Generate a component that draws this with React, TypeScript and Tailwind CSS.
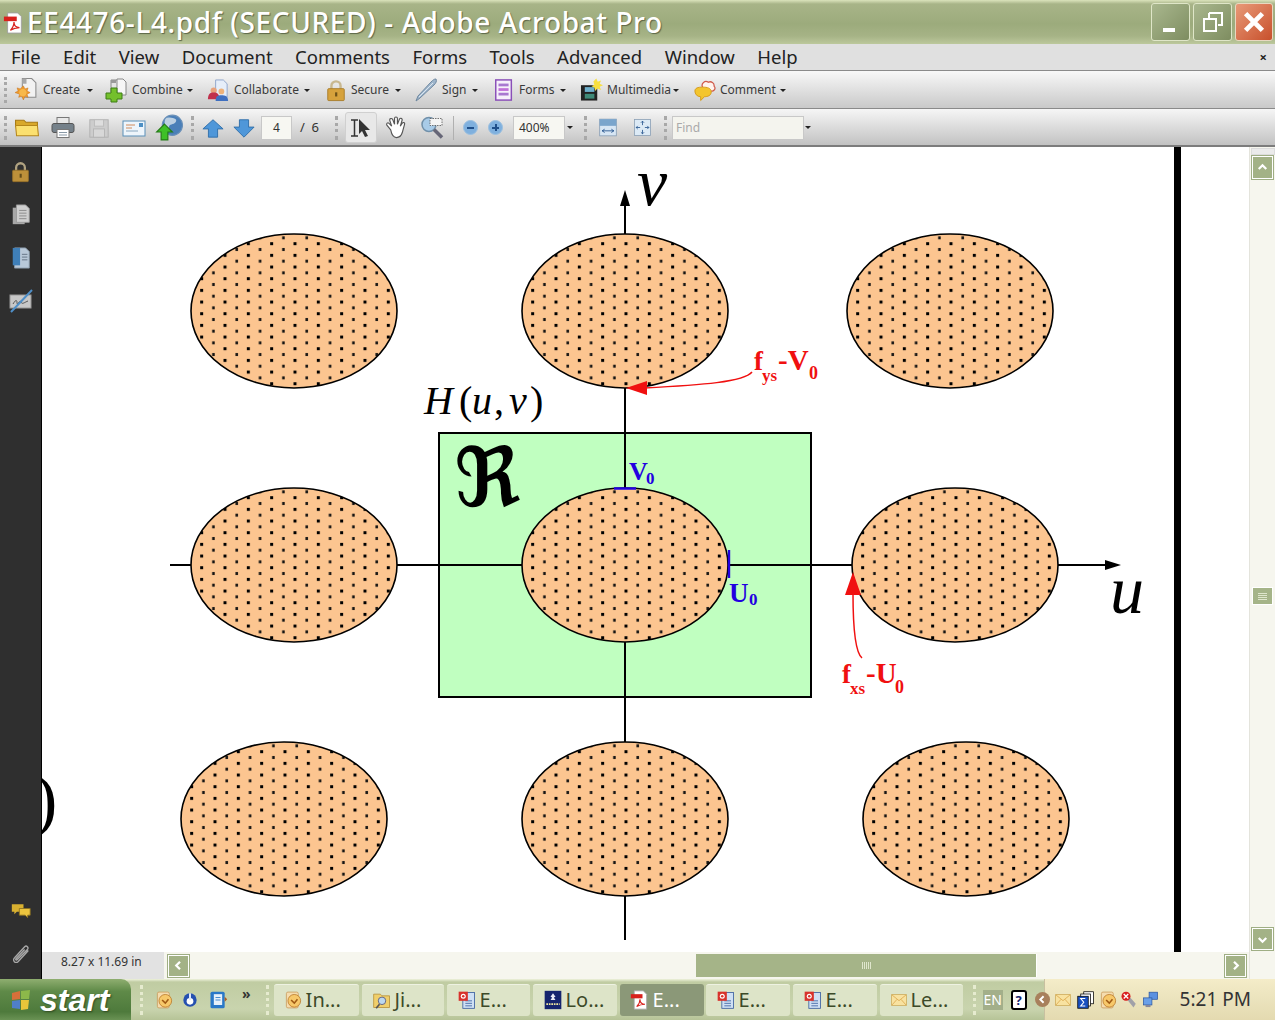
import React from "react";

type P = { className?: string };
const Grid = ({ className = "", children }: P & { children: React.ReactNode }) => (
  <svg viewBox="0 0 24 24" className={"shrink-0 " + className}>{children}</svg>
);

const Grip = ({ className = "" }: P) => <div className={"shrink-0 w-[3px] border-l-[3px] border-dotted border-[#a8a8a8] " + className} />;
const Caret = ({ className = "" }: P) => <div className={"shrink-0 w-0 h-0 border-x-[3px] border-x-transparent border-t-[3px] border-t-[#222] " + className} />;

const CreateIc = () => (<Grid className="w-[25px] h-[26px]"><path d="M8 1h9l4 4v14H8z" fill="#f2f2f2" stroke="#8a8a8a" /><path d="M8 1h4v5H8z" fill="#a8a8a8" /><path d="M9 8l1.500 3 3-1-1 3 3 1.500-3 1.500 1 3-3-1-1.500 3.500-1.500-3.500-3 1 1-3L1 14.500 4 13l-1-3 3 1z" fill="#ee9a2c" stroke="#c8741c" strokeWidth=".5" /><circle cx="8.500" cy="14.500" r="3.500" fill="#f7b84a" /></Grid>);
const CombineIc = () => (<Grid className="w-[24px] h-[26px]"><path d="M7 2h8l3 3v9H7z" fill="#e4e4e4" stroke="#888" /><path d="M7 2h5v3H7z" fill="#999" /><path d="M13 1h6l3 3v13h-9z" fill="#f6f6f6" stroke="#888" /><path d="M7 10h6v5h5v6h-5v3H7v-3H2v-6h5z" fill="#74c02c" stroke="#3d7d15" /></Grid>);
const CollabIc = () => (<Grid className="w-[23px] h-[25px]"><path d="M9 1h8l4 4v14H9z" fill="#e6eef9" stroke="#8fa5cc" /><circle cx="7" cy="12" r="3.200" fill="#e8a27c" /><path d="M1 21c0-5 2-7 6-7s6 2 6 7z" fill="#c0304c" /><circle cx="15" cy="13" r="3" fill="#eeb27a" /><path d="M9 23c0-5 2-6 6-6s7 1 7 6z" fill="#3f6fc0" /></Grid>);
const LockIc = ({ className = "w-[22px] h-[25px]" }: P) => (<Grid className={className}><path d="M7 11V7a5 5 0 0 1 10 0v4" fill="none" stroke="#c8b890" strokeWidth="2.600" /><rect x="3" y="10" width="18" height="13" rx="1" fill="#d6a23c" stroke="#a87c28" /><rect x="11" y="14" width="2.400" height="4.500" fill="#6d5218" /></Grid>);
const SignIc = () => (<Grid className="w-[24px] h-[26px]"><path d="M22 1c1 2 0 4-2 6L6 20l-4 3 2-5L17 4c2-2 3-3 5-3z" fill="#9fb6cc" stroke="#6f88a0" /><path d="M19 5L5 19" stroke="#dbe6f0" /></Grid>);
const FormsIc = () => (<Grid className="w-[22px] h-[24px]"><rect x="3" y="1" width="17" height="22" fill="#f6f0fb" stroke="#8a4fb8" strokeWidth="1.600" /><rect x="6" y="5" width="11" height="3" fill="#a878d0" /><rect x="6" y="10" width="11" height="3" fill="#c070d8" /><rect x="6" y="15" width="11" height="3" fill="#a878d0" /></Grid>);
const MediaIc = () => (<Grid className="w-[23px] h-[26px]"><rect x="1" y="7" width="17" height="16" fill="#222" /><rect x="5" y="9" width="10" height="5" fill="#6fb0cc" /><rect x="5" y="16" width="10" height="5" fill="#3f8a78" /><path d="M17 0l1.500 3.500L22 2l-1.500 3.500L24 7l-3.500 1.500L22 12l-4-1.500L16 13l-1-3.500L12 8l3-1.500L14 3z" fill="#f8e040" /></Grid>);
const CommentIc = () => (<Grid className="w-[23px] h-[24px]"><path d="M10 9a4 4 0 0 1 6-5 4 4 0 0 1 6 4 3 3 0 0 1-3 5" fill="#fff3ee" stroke="#d05a4a" strokeWidth="1.300" /><path d="M2 13c0-3 3-4 8-4s9 1 9 5-4 5-7 5l-4 4v-4c-4 0-6-3-6-6z" fill="#f3c52e" stroke="#d49a1a" /></Grid>);

const Tool = ({ icon, label, labelW, gap = "ml-[1px]", className = "" }: { icon: React.ReactNode; label: string; labelW: string; gap?: string; className?: string }) => (
  <div className={"flex items-center shrink-0 " + className}>
    {icon}
    <span className={"text-[12px] text-[#3a3a3a] whitespace-nowrap ml-[4px] " + labelW}>{label}</span>
    <Caret className={gap} />
  </div>
);

const FolderIc = () => (<Grid className="w-[26px] h-[25px]"><path d="M1 5h8l2 2h11v4H1z" fill="#d9a82a" stroke="#a67a14" /><path d="M1 10h21l1 10H2z" fill="#fbe070" stroke="#b5861a" /></Grid>);
const PrintIc = () => (<Grid className="w-[24px] h-[25px]"><rect x="6" y="2" width="12" height="7" fill="#e8e8e8" stroke="#777" /><rect x="1" y="8" width="22" height="9" rx="2" fill="#75818a" stroke="#555" /><rect x="6" y="14" width="12" height="8" fill="#fff" stroke="#777" /><path d="M8 17h8M8 19.500h8" stroke="#8a9aa8" /></Grid>);
const SaveIc = () => (<Grid className="w-[22px] h-[24px]"><rect x="2" y="3" width="20" height="19" fill="#cdcdcd" stroke="#b0b0b0" /><rect x="7" y="3" width="10" height="7" fill="#dedede" stroke="#bbb" /><rect x="6" y="13" width="12" height="9" fill="#d8d8d8" stroke="#b5b5b5" /></Grid>);
const MailIc = () => (<Grid className="w-[26px] h-[24px]"><rect x="1" y="5" width="22" height="15" fill="#eef5fb" stroke="#5a8fb8" /><rect x="17" y="7" width="4" height="4" fill="#4d8fc4" /><path d="M4 9h9M4 12h6" stroke="#d08a5a" /><path d="M4 15h12" stroke="#8aa8c0" /></Grid>);
const WebIc = () => (<Grid className="w-[28px] h-[27px]"><circle cx="15" cy="10" r="9" fill="#4a7fb8" stroke="#6a90b8" /><path d="M11 3c4 0 9 1 7 4s-6 1-6 5-4-1-4-4 1-5 3-5z" fill="#bcd0e2" /><path d="M8 9l7 7h-4v7H5v-7H1z" fill="#3ec028" stroke="#237a16" /></Grid>);
const Arrow = ({ down }: { down?: boolean }) => (<Grid className="w-[22px] h-[24px]"><path d={down ? "M7 3h10v8h6L12 22 1 11h6z" : "M7 22h10v-9h6L12 3 1 13h6z"} fill="#4f97d9" stroke="#2f6da8" /></Grid>);
const SelectIc = () => (<Grid className="w-[24px] h-[24px]"><path d="M2 4h7M2 20h7M5.500 4v16" stroke="#333" strokeWidth="1.500" fill="none" /><path d="M10 3l11 11h-5l3 6-3 1-3-6-3 3z" fill="#333" /></Grid>);
const HandIc = () => (<Grid className="w-[23px] h-[24px]"><path d="M7 14L3 9c-1-2 1-3 2-2l3 3-2-6c-.5-2 2-2.500 3-1l2 5V2c0-2 3-2 3 0v6l2-5c1-2 3-1 3 .5L17 10l2-3c1-1.500 3-.5 2.500 1L19 17c-1 3-3 5-6 5-3.500 0-5-3-6-8z" fill="#fff" stroke="#555" strokeWidth="1.200" /></Grid>);
const ZoomIc = () => (<Grid className="w-[24px] h-[25px]"><circle cx="8" cy="9" r="7" fill="#a8cbe8" stroke="#7090aa" strokeWidth="1.500" /><path d="M13 14l8 8" stroke="#667" strokeWidth="3.500" /><rect x="9" y="3" width="12" height="7" fill="#f4f4f4" stroke="#555" strokeDasharray="1.500 1" strokeWidth=".8" /></Grid>);
const Round = ({ plus }: { plus?: boolean }) => (<div className="shrink-0 w-[15px] h-[15px] rounded-full bg-[#7fb0de] border border-[#9cc0e0] flex items-center justify-center relative"><div className="w-[7px] h-[2px] bg-[#1f4f8a]" />{plus && <div className="absolute w-[2px] h-[7px] bg-[#1f4f8a]" />}</div>);
const FitW = () => (<Grid className="w-[20px] h-[23px]"><rect x="2" y="2" width="20" height="20" fill="#d7e6f4" stroke="#8a9fb5" /><rect x="2" y="2" width="20" height="8" fill="#7aa5cc" /><path d="M5 16h14M5 16l3-2M5 16l3 2M19 16l-3-2M19 16l-3 2" stroke="#1f4f8a" fill="none" /></Grid>);
const FitP = () => (<Grid className="w-[19px] h-[23px]"><rect x="2" y="2" width="20" height="20" fill="#dceaf6" stroke="#8a9fb5" /><path d="M12 4v5M10 6l2-2 2 2M12 20v-5M10 18l2 2 2-2M4 12h5M6 10l-2 2 2 2M20 12h-5M18 10l2 2-2 2" stroke="#1f4f8a" fill="none" /></Grid>);

const Side = ({ children, className = "" }: { children: React.ReactNode; className?: string }) => <div className={"flex justify-center " + className}>{children}</div>;

const ScrollBtn = ({ dir, className = "" }: { dir: "up" | "down" | "left" | "right"; className?: string }) => {
  const d = { up: "M5 12l5-5 5 5", down: "M5 8l5 5 5-5", left: "M12 5l-5 5 5 5", right: "M8 5l5 5-5 5" }[dir];
  return (
    <div className={"shrink-0 w-[21px] h-[22px] bg-[#a3b286] border border-white outline outline-1 outline-[#9fae84] flex items-center justify-center " + className}>
      <svg viewBox="0 0 20 20" className="w-[15px] h-[15px]"><path d={d} fill="none" stroke="#fff" strokeWidth="3" /></svg>
    </div>
  );
};

const centers: [number, number][] = [
  [294, 311], [625, 311], [950, 311],
  [294, 565], [625, 565], [955, 565],
  [284, 819], [625, 819], [966, 819],
];

const serif = "font-['Liberation_Serif',serif]";

const Page = () => (
  <svg viewBox="42 147 1207 805" className="w-[1207px] h-[805px] block bg-white shrink-0">
    <defs>
      {centers.map(([cx, cy], i) => (
        <pattern key={i} id={"dots" + i} patternUnits="userSpaceOnUse" x={cx - 0.5} y={cy - 68.8} width={23.33} height={11.67}>
          <rect width="23.33" height="11.67" fill="#fcc590" />
          <rect x="0" y="0" width="3" height="3" fill="#000" />
          <rect x="12" y="5.800" width="2.500" height="3" fill="#111" />
        </pattern>
      ))}
    </defs>
    <rect x="439" y="433" width="372" height="264" fill="#c0ffc0" stroke="#000" strokeWidth="2" />
    <path d="M625 200V940M170 565H1108" stroke="#000" strokeWidth="2" fill="none" />
    <path d="M625 190l-5 16h10zM1121 565l-16-5v10z" fill="#000" />
    {centers.map(([cx, cy], i) => (
      <ellipse key={i} cx={cx} cy={cy} rx="103" ry="77" fill={`url(#dots${i})`} stroke="#000" strokeWidth="1.600" />
    ))}
    <rect x="1174" y="147" width="7" height="805" fill="#000" />
    <path d="M614 488.500h22M729 550v28" stroke="#2200e0" strokeWidth="2.400" fill="none" />
    <path d="M752 372c-8 10-50 13-108 16" stroke="#f01010" strokeWidth="1.500" fill="none" />
    <path d="M626 388l21-7v14z" fill="#f01010" />
    <path d="M862 658c-6-5-9-30-9-64" stroke="#f01010" strokeWidth="1.500" fill="none" />
    <path d="M853 572l-8 23h16z" fill="#f01010" />
    <g className={serif}>
      <text x="34" y="823" fontSize="70">)</text>
      <text x="637" y="205" fontSize="68" fontStyle="italic">v</text>
      <text x="1110" y="613" fontSize="68" fontStyle="italic">u</text>
      <text x="424" y="414" fontSize="40" fontStyle="italic">H</text>
      <text x="459" y="414" fontSize="40">(</text>
      <text x="472" y="414" fontSize="40" fontStyle="italic">u</text>
      <text x="494" y="414" fontSize="40">,</text>
      <text x="509" y="414" fontSize="40" fontStyle="italic">v</text>
      <text x="530" y="414" fontSize="40">)</text>
      <g fill="#f01010" fontWeight="700">
        <text x="754" y="370" fontSize="27">f</text>
        <text x="762" y="381" fontSize="17">ys</text>
        <text x="778" y="370" fontSize="29">-V</text>
        <text x="809" y="379" fontSize="18">0</text>
        <text x="842" y="683" fontSize="27">f</text>
        <text x="850" y="694" fontSize="17">xs</text>
        <text x="866" y="683" fontSize="29">-U</text>
        <text x="895" y="693" fontSize="18">0</text>
      </g>
      <g fill="#2200e0" fontWeight="700">
        <text x="629" y="480" fontSize="26">V</text>
        <text x="646" y="484" fontSize="17">0</text>
        <text x="729" y="602" fontSize="27">U</text>
        <text x="749" y="605" fontSize="17">0</text>
      </g>
    </g>
    <text x="454" y="506" fontSize="82" fontWeight="700" className="font-['DejaVu_Sans',serif]">ℜ</text>
  </svg>
);

const OutlookIc = ({ className = "w-[19px] h-[20px]" }: P) => (<Grid className={className}><rect x="3" y="2" width="15" height="20" rx="2" fill="#f5dcae" stroke="#c99a5a" /><circle cx="13" cy="13" r="8" fill="#f7c86a" stroke="#b8782a" /><path d="M9 12l4 4 4-5" stroke="#a05a14" strokeWidth="2" fill="none" /></Grid>);
const PptIc = () => (<Grid className="w-[20px] h-[22px]"><rect x="7" y="3" width="14" height="19" fill="#cfe0f4" stroke="#3a5fa0" /><path d="M10 13h8M10 16h8M10 19h8" stroke="#3a5fa0" /><rect x="2" y="2" width="11" height="11" fill="#d8322c" /><circle cx="7.500" cy="7.500" r="3" fill="#fff" /><circle cx="7.500" cy="7.500" r="1.500" fill="#d8322c" /></Grid>);
const PdfIc = ({ className = "w-[20px] h-[22px]" }: P) => (<Grid className={className}><path d="M5 1h11l4 4v18H5z" fill="#fff" stroke="#a0a0a0" /><rect x="1" y="5" width="14" height="5" fill="#d8201c" /><path d="M8 20c3-3 4-6 4-9 0 4 2 6 6 6-4 0-7 1-10 3z" fill="none" stroke="#d8201c" strokeWidth="1.300" /></Grid>);
const Env = ({ className = "w-[18px] h-[16px]" }: P) => (<Grid className={className}><rect x="1" y="4" width="22" height="16" fill="#f8e2a0" stroke="#c8a24a" /><path d="M1 4l11 9 11-9M1 20l8-9M23 20l-8-9" fill="none" stroke="#d49a3a" /></Grid>);

const Task = ({ icon, label, active, className = "" }: { icon: React.ReactNode; label: string; active?: boolean; className?: string }) => (
  <div className={"shrink-0 h-[32px] rounded-[3px] flex items-center pl-[10px] gap-[3px] overflow-hidden " + (active ? "bg-[#8b9878] text-white " : "bg-[#dde4c8] text-[#3c4a28] border-t border-[#eef2e2] ") + className}>
    {icon}
    <span className="text-[20px] leading-none whitespace-nowrap">{label}</span>
  </div>
);

export default function App() {
  return (
    <div className="w-[1275px] h-[1020px] flex flex-col overflow-hidden bg-white font-['Noto_Sans',sans-serif] relative">
      {/* title bar */}
      <div className="h-[44px] shrink-0 flex items-center pl-[3px] pr-[2px] bg-[linear-gradient(#dbe3bc_0px,#a8b488_4px,#9cab7c_24px,#a6b386_36px,#bcc89c_44px)]">
        <PdfIc className="w-[22px] h-[24px] mt-[2px]" />
        <span className="ml-[2px] text-[28px] leading-none font-medium text-white tracking-[0.6px] whitespace-nowrap [text-shadow:1px_1px_1px_#5c6648]">EE4476-L4.pdf (SECURED) - Adobe Acrobat Pro</span>
        <div className="flex-1" />
        <div className="w-[39px] h-[38px] rounded-[3px] border border-[#dfe6c8] bg-[linear-gradient(135deg,#a9b78e,#7e8d60)] flex items-end pl-[11px] pb-[8px]"><div className="w-[12px] h-[4px] bg-white" /></div>
        <div className="ml-[3px] w-[39px] h-[38px] rounded-[3px] border border-[#dfe6c8] bg-[linear-gradient(135deg,#a9b78e,#7e8d60)] flex items-center justify-center">
          <svg viewBox="0 0 20 20" className="w-[20px] h-[20px]"><path d="M6 1h13v12h-4M6 1v5" fill="none" stroke="#fff" strokeWidth="2" /><rect x="1" y="7" width="12" height="12" fill="none" stroke="#fff" strokeWidth="2" /></svg>
        </div>
        <div className="ml-[3px] w-[38px] h-[38px] rounded-[3px] border border-[#e8d8c0] bg-[linear-gradient(135deg,#e89a78,#c8502c)] flex items-center justify-center">
          <svg viewBox="0 0 20 20" className="w-[24px] h-[24px]"><path d="M3 3l14 14M17 3L3 17" stroke="#fff" strokeWidth="4" /></svg>
        </div>
      </div>
      {/* menu */}
      <div className="h-[27px] shrink-0 flex items-center pl-[11px] pr-[8px] pt-[1px] gap-[22.5px] bg-[#e0e0e0] text-[18.5px] text-[#222] border-b border-[#8a8a8a]">
        {["File", "Edit", "View", "Document", "Comments", "Forms", "Tools", "Advanced", "Window", "Help"].map((m) => <span key={m} className="leading-none">{m}</span>)}
        <div className="flex-1" />
        <span className="text-[13px] font-bold leading-none">×</span>
      </div>
      {/* toolbar 1 */}
      <div className="h-[38px] shrink-0 flex items-center pl-[4px] pt-[1px] bg-[linear-gradient(#f8f8f8,#c9c9c9)] border-b border-[#8a8a8a]">
        <Grip className="h-[26px]" />
        <Tool className="ml-[7px]" icon={<CreateIc />} label="Create" labelW="w-[41px]" gap="ml-[3px]" />
        <Tool className="ml-[11px]" icon={<CombineIc />} label="Combine" labelW="w-[54px]" />
        <Tool className="ml-[14px]" icon={<CollabIc />} label="Collaborate" labelW="w-[69px]" />
        <Tool className="ml-[15px]" icon={<LockIc />} label="Secure" labelW="w-[43px]" />
        <Tool className="ml-[13px]" icon={<SignIc />} label="Sign" labelW="w-[29px]" />
        <Tool className="ml-[15px]" icon={<FormsIc />} label="Forms" labelW="w-[40px]" />
        <Tool className="ml-[14px]" icon={<MediaIc />} label="Multimedia" labelW="w-[65px]" />
        <Tool className="ml-[14px]" icon={<CommentIc />} label="Comment" labelW="w-[59px]" />
      </div>
      {/* toolbar 2 */}
      <div className="h-[38px] shrink-0 flex items-center pl-[4px] pt-[1px] bg-[linear-gradient(#f6f6f6,#c2c2c2)] border-b-2 border-[#7c7c7c]">
        <Grip className="h-[24px]" />
        <div className="ml-[7px]"><FolderIc /></div>
        <div className="ml-[11px]"><PrintIc /></div>
        <div className="ml-[13px]"><SaveIc /></div>
        <div className="ml-[11px]"><MailIc /></div>
        <div className="ml-[8px]"><WebIc /></div>
        <Grip className="h-[24px] ml-[8px]" />
        <div className="ml-[8px]"><Arrow /></div>
        <div className="ml-[9px]"><Arrow down /></div>
        <div className="ml-[6px] w-[31px] h-[24px] bg-[#f7f7f2] border border-[#c8c8c8] flex items-center justify-center text-[12px] text-[#333]">4</div>
        <span className="ml-[8px] w-[24px] text-[13px] text-[#333] whitespace-nowrap">/ &nbsp;6</span>
        <Grip className="h-[24px] ml-[11px]" />
        <div className="ml-[7px] w-[32px] h-[31px] rounded-[3px] bg-[#e8e8e8] border border-[#d0d0d0] flex items-center justify-center"><SelectIc /></div>
        <div className="ml-[7px]"><HandIc /></div>
        <div className="ml-[14px]"><ZoomIc /></div>
        <div className="ml-[8px] w-[1px] h-[24px] bg-[#b0b0b0]" />
        <div className="ml-[9px]"><Round /></div>
        <div className="ml-[10px]"><Round plus /></div>
        <div className="ml-[10px] w-[52px] h-[24px] bg-[#f7f7f2] border border-[#c8c8c8] flex items-center pl-[5px] text-[12px] text-[#333]">400%</div>
        <Caret className="ml-[2px]" />
        <Grip className="h-[24px] ml-[11px]" />
        <div className="ml-[11px]"><FitW /></div>
        <div className="ml-[15px]"><FitP /></div>
        <Grip className="h-[24px] ml-[12px]" />
        <div className="ml-[5px] w-[132px] h-[24px] bg-[#f4f4ee] border border-[#c8c8c8] flex items-center pl-[3px] text-[12px] text-[#aaa]">Find</div>
        <Caret className="ml-[1px]" />
      </div>
      {/* main */}
      <div className="flex-1 min-h-0 flex">
        <div className="w-[42px] shrink-0 bg-[#2f2f2f] border-r border-black flex flex-col">
          <Side className="mt-[13px]"><LockIc className="w-[21px] h-[24px] opacity-85" /></Side>
          <Side className="mt-[19px]"><Grid className="w-[22px] h-[24px]"><rect x="3" y="4" width="13" height="18" fill="#a8a8a8" /><path d="M7 1h10l4 4v15H7z" fill="#cfcfcf" stroke="#999" /><path d="M10 7h8M10 10h8M10 13h8M10 16h8" stroke="#888" /></Grid></Side>
          <Side className="mt-[19px]"><Grid className="w-[22px] h-[24px]"><path d="M5 1h12l4 4v18H5z" fill="#b8c8d8" stroke="#8a9aaa" /><rect x="3" y="1" width="8" height="19" fill="#3f7fb8" /><path d="M13 8h6M13 11h6M13 14h6" stroke="#607080" /></Grid></Side>
          <Side className="mt-[19px]"><Grid className="w-[24px] h-[24px]"><rect x="1" y="6" width="21" height="13" fill="#c8c8c8" stroke="#999" /><path d="M4 15c3-5 4-4 4-1s3-4 4-1 4 0 7-1" stroke="#555" fill="none" /><path d="M23 1L2 23" stroke="#4f8fc8" strokeWidth="2" /></Grid></Side>
          <div className="flex-1" />
          <Side className="mb-[22px]"><Grid className="w-[24px] h-[20px]"><path d="M1 4h14v9H7l-3 3v-3H1z" fill="#d8b030" /><path d="M10 9h13v8h-3v3l-3-3h-7z" fill="#ecc43e" stroke="#8a7020" /></Grid></Side>
          <Side className="mb-[12px]"><Grid className="w-[22px] h-[24px]"><path d="M20 7L9 19c-3 3-7-1-4-4L16 3c2-2 5 1 3 3L8 17c-1 1-2.500 0-1.500-1L16 6" fill="none" stroke="#a8a8a8" strokeWidth="1.500" /></Grid></Side>
        </div>
        <div className="w-[1207px] shrink-0 flex flex-col">
          <Page />
          <div className="h-[27px] shrink-0 flex items-center bg-[#f6f6ee]">
            <div className="w-[122px] h-full bg-[#e2e2e2] pl-[19px] text-[12px] text-[#333] leading-[20px] whitespace-nowrap shrink-0">8.27 x 11.69 in</div>
            <ScrollBtn dir="left" className="ml-[4px]" />
            <div className="w-[507px] shrink-0" />
            <div className="w-[341px] h-[23px] shrink-0 bg-[#a5b488] border-r border-white flex items-center justify-center">
              <div className="w-[9px] h-[7px] bg-[repeating-linear-gradient(90deg,#dfe6cc_0px,#dfe6cc_1px,transparent_1px,transparent_2px)]" />
            </div>
            <div className="w-[188px] shrink-0" />
            <ScrollBtn dir="right" />
          </div>
        </div>
        <div className="w-[26px] shrink-0 flex flex-col items-center bg-[#f6f6ee] border-l border-[#e4e4dc]">
          <div className="w-[24px] h-[7px] mt-[1px] bg-[#ebebeb] border border-[#dcdcdc]" />
          <ScrollBtn dir="up" className="mt-[1px] h-[23px]" />
          <div className="h-[408px] shrink-0" />
          <div className="w-[21px] h-[18px] shrink-0 bg-[#a5b488] border border-white flex items-center justify-center">
            <div className="w-[9px] h-[7px] bg-[repeating-linear-gradient(#dfe6cc_0px,#dfe6cc_1px,transparent_1px,transparent_2px)]" />
          </div>
          <div className="h-[323px] shrink-0" />
          <ScrollBtn dir="down" />
        </div>
      </div>
      {/* taskbar */}
      <div className="h-[41px] shrink-0 flex items-center bg-[linear-gradient(#eef2dc_0px,#c0cca2_3px,#c9d4ae_30px,#b6c397_41px)]">
        <div className="w-[131px] h-full shrink-0 rounded-tr-[10px] bg-[linear-gradient(#8fae70,#5f8a48_30%,#4e7a3c_80%,#6a9254)] flex items-center pl-[9px] gap-[7px]">
          <svg viewBox="0 0 24 24" className="w-[24px] h-[24px]"><path d="M3 5l8-2v8l-8 1z" fill="#d8703a" /><path d="M12 3l9-1-1 9-8 0z" fill="#8cb84a" /><path d="M3 13l8-1v9l-8-1z" fill="#4f7fc8" /><path d="M12 12h8l-1 9-7 1z" fill="#e8c63a" /></svg>
          <span className="text-[32px] leading-none font-bold italic text-white font-['Liberation_Sans',sans-serif] [text-shadow:1px_1px_2px_#2f4a20]">start</span>
        </div>
        <Grip className="h-[30px] ml-[9px] border-[#e6ebcf]" />
        <div className="ml-[12px]"><OutlookIc /></div>
        <div className="ml-[8px]"><Grid className="w-[16px] h-[20px]"><circle cx="12" cy="12" r="10" fill="#2550b0" /><circle cx="12" cy="14" r="5" fill="#fff" /><path d="M12 2v10" stroke="#dfe8f8" strokeWidth="3" /></Grid></div>
        <div className="ml-[10px]"><Grid className="w-[20px] h-[20px]"><rect x="3" y="2" width="17" height="20" rx="2" fill="#2a78c8" /><rect x="7" y="5" width="10" height="13" fill="#e6f0fa" /><path d="M9 9h6M9 12h6" stroke="#2a78c8" /><path d="M20 8l3 3-3 3z" fill="#b05a20" /></Grid></div>
        <span className="ml-[14px] text-[14px] font-bold leading-none text-[#333] mb-[12px]">»</span>
        <Grip className="h-[30px] ml-[15px] border-[#e6ebcf]" />
        <Task className="w-[85px] ml-[5px]" icon={<OutlookIc />} label="In..." />
        <Task className="w-[82px] ml-[3px]" icon={<Grid className="w-[20px] h-[20px]"><path d="M2 5h8l2 2h9v14H2z" fill="#f0cf6a" stroke="#b8923a" /><circle cx="12" cy="13" r="4.500" fill="#bcd8ee" stroke="#557" /><path d="M9 17l-4 5" stroke="#555" strokeWidth="2" /></Grid>} label="Ji..." />
        <Task className="w-[83px] ml-[3px]" icon={<PptIc />} label="E..." />
        <Task className="w-[84px] ml-[3px]" icon={<Grid className="w-[20px] h-[22px]"><rect x="2" y="1" width="20" height="22" fill="#15246e" /><path d="M12 4l3 4-2 1 2 3h-6l2-3-2-1z" fill="#e8e8f4" /><path d="M4 17h16" stroke="#f0e8a0" strokeWidth="2" strokeDasharray="2 1" /></Grid>} label="Lo..." />
        <Task active className="w-[84px] ml-[3px]" icon={<PdfIc />} label="E..." />
        <Task className="w-[84px] ml-[2px]" icon={<PptIc />} label="E..." />
        <Task className="w-[84px] ml-[3px]" icon={<PptIc />} label="E..." />
        <Task className="w-[83px] ml-[3px]" icon={<Env />} label="Le..." />
        <Grip className="h-[30px] ml-[10px] border-[#e6ebcf]" />
        <div className="ml-[7px] w-[20px] h-[20px] bg-[#a3af8a] text-[14px] leading-[20px] text-center text-white shrink-0">EN</div>
        <div className="ml-[8px] shrink-0 w-[16px] h-[20px] bg-white border-2 border-black rounded-[3px] text-[13px] leading-[16px] font-bold text-center text-[#15246e]">?</div>
        <div className="ml-[8px] w-[15px] h-[15px] rounded-full bg-[#a8805c] flex items-center justify-center shrink-0 relative z-10">
          <svg viewBox="0 0 20 20" className="w-[11px] h-[11px]"><path d="M12 4l-6 6 6 6" fill="none" stroke="#fff" strokeWidth="3.500" /></svg>
        </div>
        <div className="flex-1 h-full -ml-[6px] pl-[9px] flex items-center bg-[linear-gradient(#f4ecc8_0px,#ebe3bd_50%,#e4dab0)] border-l border-[#c8c0a0]">
          <Env />
          <div className="ml-[5px]"><Grid className="w-[18px] h-[22px]"><rect x="9" y="1" width="13" height="16" fill="#fff" stroke="#000" /><rect x="5" y="4" width="13" height="16" fill="#fff" stroke="#000" /><rect x="1" y="7" width="14" height="16" fill="#1a50c0" stroke="#000" /><path d="M11 10H5l4 5-4 5h6" fill="none" stroke="#fff" strokeWidth="1.500" /></Grid></div>
          <div className="ml-[4px]"><OutlookIc /></div>
          <div className="ml-[2px]"><Grid className="w-[18px] h-[22px]"><path d="M13 8l8 9-3 5-8-10z" fill="#a0a0a8" /><circle cx="8" cy="7" r="6" fill="#d82020" /><path d="M5 4l6 6M11 4l-6 6" stroke="#fff" strokeWidth="1.800" /></Grid></div>
          <div className="ml-[4px]"><Grid className="w-[17px] h-[22px]"><rect x="10" y="1" width="12" height="10" fill="#5a90e0" stroke="#2a55a0" /><rect x="2" y="9" width="12" height="10" fill="#6aa0e8" stroke="#2a55a0" /><rect x="5" y="19" width="7" height="3" fill="#889" /></Grid></div>
          <span className="ml-[21px] text-[19px] leading-none text-[#333] whitespace-nowrap">5:21 PM</span>
        </div>
      </div>
    </div>
  );
}
